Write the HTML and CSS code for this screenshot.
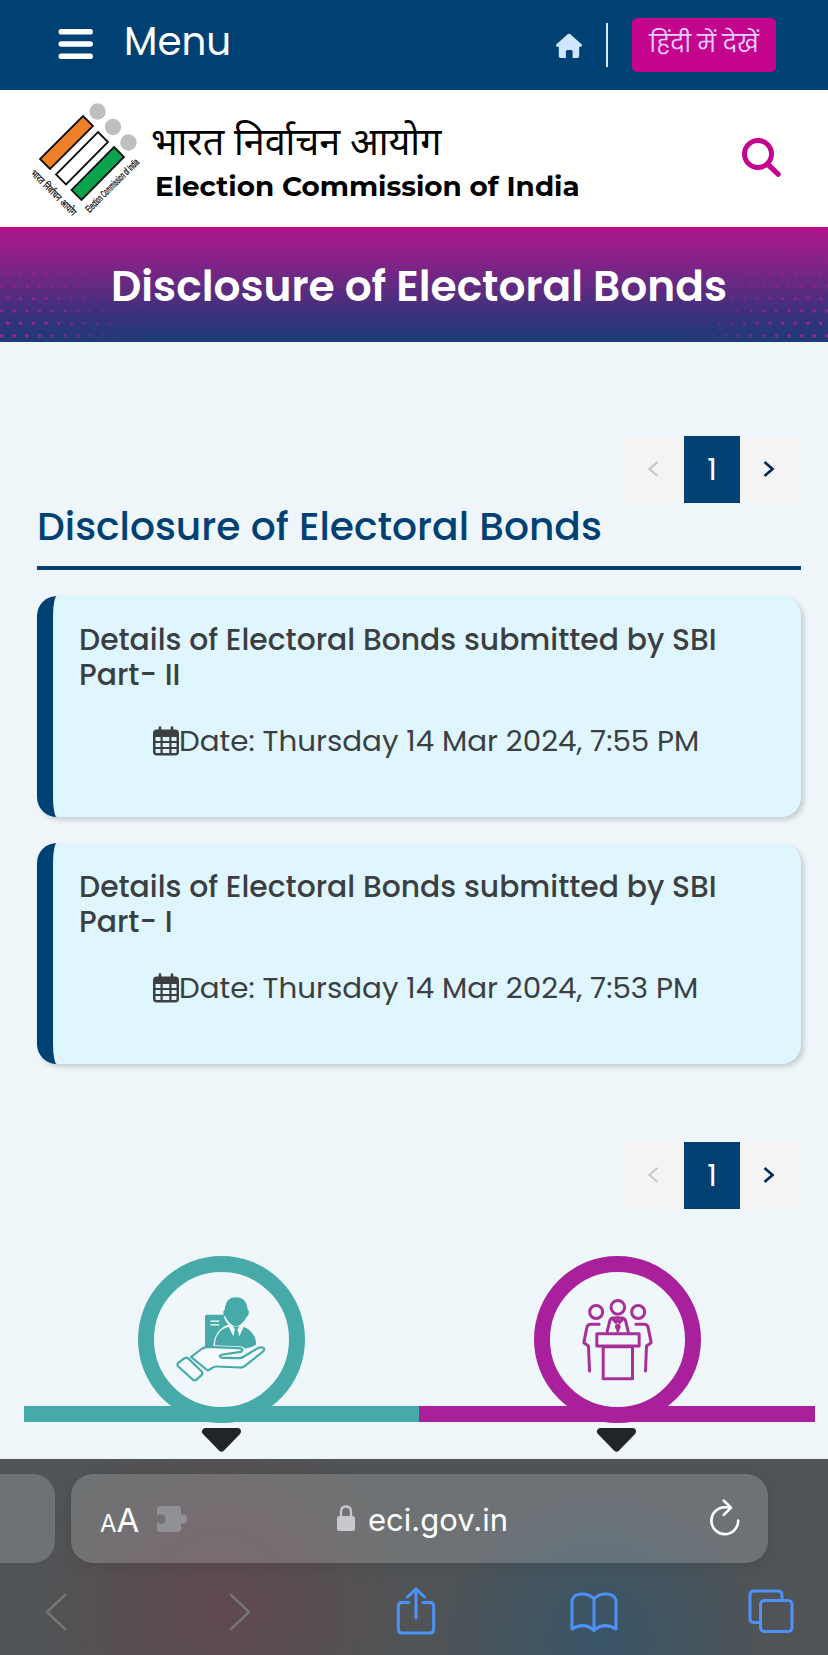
FILE: index.html
```html
<!DOCTYPE html>
<html lang="en">
<head>
<meta charset="utf-8">
<meta name="viewport" content="width=device-width">
<title>Disclosure of Electoral Bonds</title>
<link rel="stylesheet" href="styles.css">
</head>
<body>
<div class="screen">
  <nav class="topbar">
    <svg class="burger" viewBox="0 0 36 32"><path d="M3.300 3.800H32.200M3.300 16H32.200M3.300 28.200H32.200" stroke="#fff" stroke-width="5.600" stroke-linecap="round"/></svg>
    <span class="menu">Menu</span>
    <svg class="home" viewBox="0 0 28 26"><path d="M12.900 1.100Q14 .2 15.100 1.100L26.800 11.600Q27.800 13.500 26 13.700H24.200V23Q24.200 25 22.300 25H17.600V18.500Q17.600 17 16.100 17H12.400Q10.900 17 10.900 18.500V25H5.700Q3.800 25 3.800 23V13.700H2Q.2 13.500 1.200 11.600Z" fill="#cfe6ff"/></svg>
    <span class="divider"></span>
    <a class="lang"><span>हिंदी में देखें</span></a>
  </nav>

  <header class="brand">
    <svg class="logo" viewBox="0 0 130 125">
      <g stroke="#111" stroke-width="1.800">
        <path d="M63 21 73 31 30 74 20 64Z" fill="#ee8127"/>
        <path d="M78 37 88 47 46 89.500 36 79.500Z" fill="#fff"/>
        <path d="M94 52 104 62 61.500 105 51.500 95Z" fill="#09a34d"/>
      </g>
      <g fill="#bfbfbf"><circle cx="77.600" cy="16.500" r="8.200"/><circle cx="93" cy="32" r="8.200"/><circle cx="108.500" cy="47.500" r="8.200"/></g>
      <text class="logo-text" transform="translate(10 79) rotate(45)" textLength="60" lengthAdjust="spacingAndGlyphs" font-size="10" stroke="#111" stroke-width=".25">भारत निर्वाचन आयोग</text>
      <text class="logo-text" transform="translate(69.500 118) rotate(-45)" textLength="71" lengthAdjust="spacingAndGlyphs" font-size="10" stroke="#111" stroke-width=".35">Election Commission of India</text>
    </svg>
    <div class="names">
      <div class="name-hi">भारत निर्वाचन आयोग</div>
      <div class="name-en">Election Commission of India</div>
    </div>
    <svg class="search" viewBox="0 0 42 42"><circle cx="17" cy="17" r="13.500" fill="none" stroke="#c4048c" stroke-width="5"/><path d="M27 27.500 37.300 37.300" stroke="#c4048c" stroke-width="5.200" stroke-linecap="round"/></svg>
  </header>

  <section class="banner">
    <svg class="dots" viewBox="0 0 828 115">
      <defs>
        <pattern id="dot" width="12.700" height="24.800" patternUnits="userSpaceOnUse" x="1.600" y="-9">
          <circle cx="6.350" cy="6.200" r="1.700" fill="#d0189c"/><circle cx="0" cy="18.600" r="1.700" fill="#d0189c"/><circle cx="12.700" cy="18.600" r="1.700" fill="#d0189c"/>
        </pattern>
        <radialGradient id="fl" gradientUnits="userSpaceOnUse" cx="0" cy="115" r="150" gradientTransform="translate(0 34) scale(1 .7)"><stop offset="0" stop-color="#fff"/><stop offset="1" stop-color="#fff" stop-opacity="0"/></radialGradient>
        <radialGradient id="fr" gradientUnits="userSpaceOnUse" cx="828" cy="115" r="150" gradientTransform="translate(0 34) scale(1 .7)"><stop offset="0" stop-color="#fff"/><stop offset="1" stop-color="#fff" stop-opacity="0"/></radialGradient>
        <mask id="corners"><rect width="400" height="115" fill="url(#fl)"/><rect x="428" width="400" height="115" fill="url(#fr)"/></mask>
      </defs>
      <rect width="828" height="115" fill="url(#dot)" mask="url(#corners)"/>
    </svg>
    <h1 class="banner-title">Disclosure of Electoral Bonds</h1>
  </section>

  <main class="content">
    <div class="pager">
      <span class="step off"><svg viewBox="0 0 10 16"><path d="M9.500 1 1.500 8l8 7"/></svg></span>
      <span class="page"><span>1</span></span>
      <span class="step"><svg viewBox="0 0 10 16"><path d="M.5 1 8.500 8l-8 7"/></svg></span>
    </div>
    <h2 class="heading"><span>Disclosure of Electoral Bonds</span></h2>

    <article class="card">
      <div class="card-title">Details of Electoral Bonds submitted by SBI Part- II</div>
      <div class="date">
        <svg class="cal" viewBox="0 0 26 30"><path d="M7 1.500V6M19 1.500V6" stroke="#3b3f42" stroke-width="2.600" stroke-linecap="round"/><rect y="3.500" width="26" height="26" rx="3.800" fill="#3b3f42"/><path d="M2.500 11h5v3.900h-5zM9.700 11h6.600v3.900H9.700zM18.500 11h5v3.900h-5zM2.500 17h5v3.900h-5zM9.700 17h6.600v3.900H9.700zM18.500 17h5v3.900h-5zM2.500 23h5v3.900H3.500q-1 0-1-1zM9.700 23h6.600v3.900H9.700zM18.500 23h5v2.900q0 1-1 1h-4z" fill="#e0f6fe"/></svg>
        <span>Date: Thursday 14 Mar 2024, 7:55 PM</span>
      </div>
    </article>
    <article class="card">
      <div class="card-title">Details of Electoral Bonds submitted by SBI Part- I</div>
      <div class="date">
        <svg class="cal" viewBox="0 0 26 30"><path d="M7 1.500V6M19 1.500V6" stroke="#3b3f42" stroke-width="2.600" stroke-linecap="round"/><rect y="3.500" width="26" height="26" rx="3.800" fill="#3b3f42"/><path d="M2.500 11h5v3.900h-5zM9.700 11h6.600v3.900H9.700zM18.500 11h5v3.900h-5zM2.500 17h5v3.900h-5zM9.700 17h6.600v3.900H9.700zM18.500 17h5v3.900h-5zM2.500 23h5v3.900H3.500q-1 0-1-1zM9.700 23h6.600v3.900H9.700zM18.500 23h5v2.900q0 1-1 1h-4z" fill="#e0f6fe"/></svg>
        <span>Date: Thursday 14 Mar 2024, 7:53 PM</span>
      </div>
    </article>

    <div class="pager lower">
      <span class="step off"><svg viewBox="0 0 10 16"><path d="M9.500 1 1.500 8l8 7"/></svg></span>
      <span class="page"><span>1</span></span>
      <span class="step"><svg viewBox="0 0 10 16"><path d="M.5 1 8.500 8l-8 7"/></svg></span>
    </div>
  </main>

  <section class="tabs">
    <div class="tab teal">
      <div class="ring">
        <svg viewBox="133 124.500 405 405" fill="#45aaa8">
          <path d="M290 253h52q2 18 14 29-14 5-24 14-20 20-21 52-10-1-25 3v-93q0-5 4-5z"/>
          <path d="M302 272h27M302 283h27" stroke="#fff" stroke-width="3.500"/>
          <path d="M379 200q32 0 35 38 5 2 3 12-1 7-6 9-8 17-23 26-9 5-18 0-15-9-23-26-5-2-6-9-1-10 4-12 3-38 34-38z"/>
          <path d="M357 289l14 28 5-21-6-8h20l-7 8 6 22 13-29q34 13 38 52-9 9-35 13-5-8-19-7l-70-3q0-42 41-55z"/>
          <g fill="#f4fafd" stroke="#45aaa8" stroke-width="6.500" stroke-linejoin="round" stroke-linecap="round">
            <path d="M244 379l34-25q8-5 18-5l91 4q12 1 11 6-1 5-10 6l-49 7q-10 2-8 6 1 4 9 4l48 1q8 0 15-5l42-25q10-5 16-1 6 4-1 11l-55 44q-6 5-16 4l-65-3q-13-1-20 7l-10 5z"/>
            <path d="M207 396l18-13q6-4 11 1l40 39q5 5 0 10l-14 13q-7 7-13 1l-43-39q-6-6 1-12z"/>
          </g>
        </svg>
      </div>
    </div>
    <div class="tab purple">
      <div class="ring">
        <svg viewBox="134.500 123 405 405" fill="none" stroke="#a63097" stroke-width="9" stroke-linecap="round" stroke-linejoin="round">
          <circle cx="338" cy="229" r="20.500"/><circle cx="273" cy="243" r="19.500"/><circle cx="399" cy="243" r="19.500"/>
          <path d="M275 308H402V345H275zM294 347H382V443H294zM306 301l8-32q2-7 9-8l14-1 14 1q8 1 10 8l8 32M323 264l9 10 6-6 6 6 9-10"/>
          <path d="M338 286v14"/><circle cx="338" cy="287" r="4" fill="#a63097"/>
          <path d="M282 280h-25q-10 0-12 10l-9 45 14 10 3 75M392 280h25q10 0 12 10l9 45-14 10-3 75"/>
        </svg>
      </div>
    </div>
  </section>
  <div class="carets">
    <svg viewBox="0 0 39 24"><path d="M3.500 3.500H35.500L19.500 20Z" fill="#212529" stroke="#212529" stroke-width="7" stroke-linejoin="round"/></svg>
    <svg viewBox="0 0 39 24"><path d="M3.500 3.500H35.500L19.500 20Z" fill="#212529" stroke="#212529" stroke-width="7" stroke-linejoin="round"/></svg>
  </div>

  <footer class="browser">
    <div class="address-row">
      <div class="prev-tab"></div>
      <div class="address">
        <span class="aa"><small>A</small>A</span>
        <svg class="puzzle" viewBox="0 0 32 26"><path d="M4 0H22q3 0 3 3V9q6-2 6 4t-6 4v6q0 3-3 3H4q-3 0-3-3V16q3 3 7 1 3-4 0-8-4-2-7 1V3q0-3 3-3z" fill="#909095"/></svg>
        <svg class="lock" viewBox="0 0 18 27"><path d="M4 12V7q0-5.500 5-5.500T14 7v5" fill="none" stroke="#c9c8cf" stroke-width="2.300"/><rect y="11" width="18" height="15" rx="2.500" fill="#c9c8cf"/></svg>
        <span class="url">eci.gov.in</span>
        <svg class="reload" viewBox="0 0 32 38" fill="none" stroke="#fff" stroke-width="2.600" stroke-linecap="round" stroke-linejoin="round"><path d="M29.200 21.500A13.400 13.400 0 1 1 15.800 8.300L21.500 8.300M14.800 1.700 22 8.600 14.800 15.800"/></svg>
      </div>
    </div>
    <div class="tools">
      <svg class="g-back" viewBox="0 0 22 38"><path d="M20 2 2 19 20 36" fill="none" stroke="#777476" stroke-width="2.500"/></svg>
      <svg class="g-fwd" viewBox="0 0 22 38"><path d="M2 2 20 19 2 36" fill="none" stroke="#777476" stroke-width="2.500"/></svg>
      <svg class="g-share" viewBox="0 0 40 48"><path d="M13 15.500H6Q2.300 15.500 2.300 19.500V42Q2.300 46 6 46H34Q37.700 46 37.700 42V19.500Q37.700 15.500 34 15.500H27M20 31V2M11.500 10 20 1.800 28.500 10"/></svg>
      <svg class="g-book" viewBox="0 0 48 40"><path d="M24 38.500Q14 29.500 2 37V8Q4 2 12 2T24 7Q28 2 36 2T46 8V37Q34 29.500 24 38.500V7"/></svg>
      <svg class="g-tabs" viewBox="0 0 46 44"><path d="M12 33.500H6Q2 33.500 2 29.500V6Q2 2 6 2H30Q34 2 34 6V11"/><rect x="12.500" y="11.500" width="31.500" height="31" rx="4"/></svg>
    </div>
  </footer>
</div>
</body>
</html>
```
FILE: styles.css
```css
* { box-sizing: border-box; }
body {
  margin: 0;
  font-family: Poppins, Inter, "Noto Sans", "Noto Sans Devanagari", sans-serif;
}
svg { display: block; flex: none; overflow: visible; }
.screen {
  width: 828px;
  height: 1655px;
  overflow: hidden;
  display: flex;
  flex-direction: column;
  background: #eef6fa;
}
.screen > * { flex: none; }

.topbar { height: 90px; background: #004173; display: flex; align-items: flex-start; padding-left: 58px; }
.burger { width: 36px; height: 32px; margin-top: 28px; }
.menu { margin: 17px 0 0 30px; width: 431px; font-size: 38.800px; line-height: 49px; color: #fff; white-space: nowrap; }
.home { width: 28px; height: 26px; margin-top: 33px; }
.divider { width: 2px; height: 44px; margin: 23px 0 0 23px; background: #d3eaff; }
.lang { width: 144px; height: 54px; margin: 18px 0 0 24px; background: #c4048c; border-radius: 5px; color: #e5ceff; text-align: center; font-size: 23.600px; line-height: 51px; white-space: nowrap; }

.brand { height: 137px; background: #fff; display: flex; align-items: flex-start; padding-left: 20px; }
.logo { width: 130px; height: 125px; margin-top: 5px; }
.logo-text { font-family: "Liberation Sans", "Noto Sans Devanagari", sans-serif; fill: #111; }
.names { width: 591px; padding: 28px 0 0 1px; white-space: nowrap; }
.name-hi { height: 50px; font-family: "Noto Sans Devanagari", "Noto Sans", sans-serif; font-size: 37.700px; line-height: 56px; color: #000; }
.name-en { padding-left: 4px; height: 36px; font-family: Montserrat, Inter, sans-serif; font-size: 27.800px; line-height: 36px; font-weight: 700; color: #000; }
.search { width: 42px; height: 42px; margin-top: 47px; }

.banner { position: relative; height: 115px; background: linear-gradient(#c00a8c 0, #a31a8b 8px, #8b2089 30px, #652a82 57px, #3b317b 86px, #1d3b79 115px); }
.dots { position: absolute; inset: 0; width: 828px; height: 115px; }
.banner-title { position: relative; margin: 0; padding: 35px 0 0 10px; text-align: center; font-size: 42.300px; line-height: 50px; font-weight: 600; color: #fff; white-space: nowrap; }

.content { padding: 94px 27px 0 37px; height: 866px; }
.pager { display: flex; justify-content: flex-end; height: 67px; }
.step { width: 61px; background: #f4f4f4; display: flex; align-items: center; justify-content: center; padding: 0 3px 2px 0; }
.step.off { width: 60px; }
.step svg { width: 10px; height: 16px; fill: none; stroke: #062a53; stroke-width: 2.700; }
.step.off svg { stroke: #c4c9cc; stroke-width: 2.200; }
.page { width: 56px; background: #004173; color: #fff; text-align: center; font-size: 30px; line-height: 67px; }
.heading { margin: 0 0 26px; height: 67px; border-bottom: 4px solid #004173; font-size: 39.200px; line-height: 48px; font-weight: 500; color: #004173; white-space: nowrap; }
.card { height: 221px; margin-bottom: 26px; padding: 26px 0 0 26px; border-left: 16px solid #004173; border-radius: 20px; background: #e0f6fe; box-shadow: 3px 3px 5px rgba(0, 0, 0, .16); color: #3b3f42; }
.card-title { width: 660px; height: 70px; font-size: 29.800px; line-height: 35px; font-weight: 500; }
.date { display: flex; align-items: flex-start; margin: 34px 0 0 74px; font-size: 29.350px; line-height: 38px; white-space: nowrap; }
.cal { width: 26px; height: 30px; }
.date span { margin-top: -4px; }
.pager.lower { margin-top: 78px; }

.tabs { height: 214px; padding: 48px 0 0 24px; display: flex; }
.tab { height: 166px; width: 395px; border-bottom: 16px solid; display: flex; justify-content: center; }
.tab.teal { border-color: #45aaa8; }
.tab.purple { border-color: #a9209d; width: 396px; }
.ring { width: 167px; height: 167px; border: 16px solid; border-color: inherit; border-radius: 50%; background: #f0f7fb; }
.ring svg { width: 135px; height: 135px; }
.carets { height: 37px; display: flex; gap: 356px; padding: 6px 0 0 202px; }
.carets svg { width: 39px; height: 24px; }

.browser { height: 196px; padding-top: 15px; background: radial-gradient(circle 190px at 220px 150px, #60494f, transparent), radial-gradient(circle 170px at 600px 180px, #395568, transparent), #505456; }
.address-row { display: flex; gap: 16px; height: 89px; }
.prev-tab { width: 55px; border-radius: 0 22px 22px 0; background: rgba(255, 255, 255, .18); }
.address { width: 697px; border-radius: 22px; background: rgba(255, 255, 255, .18); box-shadow: 0 3px 14px rgba(0, 0, 0, .1); display: flex; align-items: flex-start; padding-left: 29px; color: #fff; }
.aa { width: 56px; margin-top: 26px; font: 33px/40px Inter, sans-serif; white-space: nowrap; }
.aa small { font-size: 24px; }
.puzzle { width: 32px; height: 26px; margin-top: 32px; }
.lock { width: 18px; height: 27px; margin: 31px 0 0 149px; }
.url { width: 140px; margin: 26px 0 0 13px; font: 31px/40px Inter, sans-serif; white-space: nowrap; }
.reload { width: 32px; height: 38px; margin: 25px 0 0 201px; }
.tools { display: flex; align-items: flex-start; padding: 24px 0 0 45px; fill: none; stroke: #4c92f8; stroke-width: 3; stroke-linejoin: round; stroke-linecap: round; }
.g-back, .g-fwd { width: 22px; height: 38px; margin-top: 6px; }
.g-fwd { margin-left: 162px; }
.g-share { width: 40px; height: 48px; margin-left: 145px; }
.g-book { width: 48px; height: 40px; margin: 5px 0 0 134px; }
.g-tabs { width: 46px; height: 44px; margin: 2px 0 0 130px; }
```
